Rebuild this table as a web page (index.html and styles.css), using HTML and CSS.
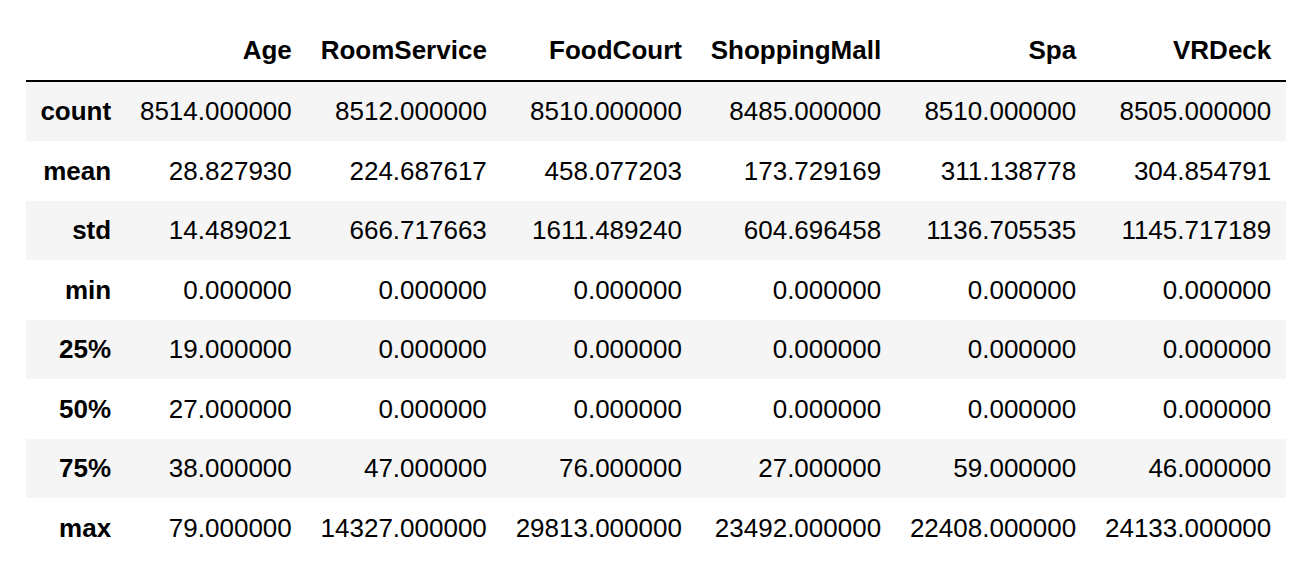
FILE: index.html
```html
<!DOCTYPE html>
<html>
<head>
<meta charset="utf-8">
<link rel="stylesheet" href="styles.css">
</head>
<body>
<table class="df">
  <thead>
    <tr><th></th><th>Age</th><th>RoomService</th><th>FoodCourt</th><th>ShoppingMall</th><th>Spa</th><th>VRDeck</th></tr>
  </thead>
  <tbody>
    <tr><th>count</th><td>8514.000000</td><td>8512.000000</td><td>8510.000000</td><td>8485.000000</td><td>8510.000000</td><td>8505.000000</td></tr>
    <tr><th>mean</th><td>28.827930</td><td>224.687617</td><td>458.077203</td><td>173.729169</td><td>311.138778</td><td>304.854791</td></tr>
    <tr><th>std</th><td>14.489021</td><td>666.717663</td><td>1611.489240</td><td>604.696458</td><td>1136.705535</td><td>1145.717189</td></tr>
    <tr><th>min</th><td>0.000000</td><td>0.000000</td><td>0.000000</td><td>0.000000</td><td>0.000000</td><td>0.000000</td></tr>
    <tr><th>25%</th><td>19.000000</td><td>0.000000</td><td>0.000000</td><td>0.000000</td><td>0.000000</td><td>0.000000</td></tr>
    <tr><th>50%</th><td>27.000000</td><td>0.000000</td><td>0.000000</td><td>0.000000</td><td>0.000000</td><td>0.000000</td></tr>
    <tr><th>75%</th><td>38.000000</td><td>47.000000</td><td>76.000000</td><td>27.000000</td><td>59.000000</td><td>46.000000</td></tr>
    <tr><th>max</th><td>79.000000</td><td>14327.000000</td><td>29813.000000</td><td>23492.000000</td><td>22408.000000</td><td>24133.000000</td></tr>
  </tbody>
</table>
</body>
</html>
```
FILE: styles.css
```css
html, body {
  margin: 0;
  background: #fff;
}
body {
  padding: 20px 0 0 26px;
  font-family: "Liberation Sans", Arial, sans-serif;
  color: #000;
}
.df {
  border-collapse: collapse;
  border-spacing: 0;
  font-size: 26px;
  line-height: 30px;
}
.df th, .df td {
  text-align: right;
  vertical-align: middle;
  padding: 14.75px 14.4px;
  white-space: nowrap;
}
.df th {
  font-weight: bold;
}
.df thead tr {
  border-bottom: 2px solid #000;
}
.df tbody tr:nth-child(odd) {
  background: #f5f5f5;
}
```
